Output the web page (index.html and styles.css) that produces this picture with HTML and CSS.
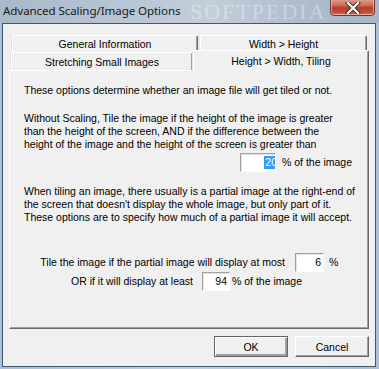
FILE: index.html
```html
<!DOCTYPE html>
<html>
<head>
<meta charset="utf-8">
<link rel="stylesheet" href="styles.css">
</head>
<body>
<div class="window">
  <div class="titlebar">
    <span class="title">Advanced Scaling/Image Options</span>
    <div class="close">
      <svg width="16" height="12" viewBox="0 0 16 12">
        <path d="M3 1 L13 11 M13 1 L3 11" stroke="#3a2a2a" stroke-width="4" stroke-linecap="square"/>
        <path d="M3 1 L13 11 M13 1 L3 11" stroke="#ffffff" stroke-width="2.2" stroke-linecap="square"/>
      </svg>
    </div>
  </div>
  <div class="client">
    <div class="tabs">
      <div class="tabrow back">
        <div class="tab t1">General Information</div>
        <div class="tab t2">Width &gt; Height</div>
      </div>
      <div class="tabrow front">
        <div class="tab t3">Stretching Small Images</div>
        <div class="tab t4">Height &gt; Width, Tiling</div>
      </div>
      <div class="panel">
        <p class="p1">These options determine whether an image file will get tiled or not.</p>
        <p class="p2">Without Scaling, Tile the image if the height of the image is greater<br>than the height of the screen, AND if the difference between the<br>height of the image and the height of the screen is greater than</p>
        <div class="row r1">
          <div class="edit e1"><span class="selected">20</span></div>
          <span class="after1">% of the image</span>
        </div>
        <p class="p3">When tiling an image, there usually is a partial image at the right-end of<br>the screen that doesn't display the whole image, but only part of it.<br>These options are to specify how much of a partial image it will accept.</p>
        <div class="row r2">
          <span class="lbl l2">Tile the image if the partial image will display at most</span>
          <div class="edit e2">6</div>
          <span class="after2">%</span>
        </div>
        <div class="row r3">
          <span class="lbl l3">OR if it will display at least</span>
          <div class="edit e3">94</div>
          <span class="after3">% of the image</span>
        </div>
      </div>
    </div>
    <div class="buttons">
      <div class="btn ok">OK</div>
      <div class="btn cancel">Cancel</div>
    </div>
  </div>
  <div class="wm wm1">SOFTPEDIA</div>
</div>
</body>
</html>
```

FILE: styles.css
```css
* { box-sizing: border-box; }
html, body { margin: 0; padding: 0; }
body {
  width: 379px;
  height: 369px;
  overflow: hidden;
  background: #f0f0f0;
}
.window {
  position: relative;
  width: 379px;
  height: 369px;
  background: linear-gradient(to right, #a8c0da 0%, #bcd0e6 50%, #a8c0da 100%);
  overflow: hidden;
  font-family: "Liberation Sans", Arial, sans-serif;
  font-size: 10.5px;
  color: #000;
}
.titlebar {
  height: 23px;
  position: relative;
  background: linear-gradient(to right, #a9b8ca 0%, #b9c6d5 35%, #c3ced9 55%, #aebccd 80%, #a6b5c7 100%);
  display: flex;
  align-items: center;
}
.title {
  font-family: "Noto Sans", "DejaVu Sans", sans-serif;
  font-size: 11.6px;
  color: #1a1a1a;
  margin-left: 3px;
  margin-top: -2px;
  letter-spacing: -0.1px;
}
.close {
  position: absolute;
  left: 330px;
  top: -2px;
  width: 45px;
  height: 18px;
  border: 1px solid #6b3a34;
  border-radius: 0 0 4px 4px;
  background: linear-gradient(to bottom, #e0a394 0%, #d06a58 40%, #b83b26 55%, #c4513a 85%, #d9806a 100%);
  box-shadow: inset 0 0 0 1px rgba(255,220,210,0.5);
  display: flex;
  align-items: center;
  justify-content: center;
}
.close svg { margin-top: 1px; }
.client {
  margin-left: 2px;
  width: 374px;
  height: 344px;
  border: 1px solid #44566c;
  background: #f0f0f0;
  display: flex;
  flex-direction: column;
}
.tabs {
  margin-top: 11px;
  margin-left: 6px;
  width: 360px;
  display: flex;
  flex-direction: column;
}
.tabrow {
  display: flex;
  align-items: flex-end;
}
.tabrow.back { height: 17px; padding-left: 3px; }
.tabrow.front { height: 18px; padding-left: 2px; }
.tab {
  background: #f0f0f0;
  border-top: 1px solid #ffffff;
  border-left: 1px solid #ffffff;
  border-right: 1px solid #696969;
  box-shadow: inset -1px 0 0 #a0a0a0, -1px 0 0 #e3e3e3;
  border-radius: 2px 2px 0 0;
  display: flex;
  align-items: center;
  justify-content: center;
  white-space: nowrap;
}
.t1 { width: 186px; height: 17px; }
.t2 { width: 167px; height: 17px; margin-left: 2px; }
.t3 { width: 182px; height: 18px; }
.t4 {
  width: 176px;
  height: 21px;
  margin-bottom: -1px;
  position: relative;
  z-index: 1;
  padding-bottom: 1px;
}
.panel {
  height: 259px;
  border-top: 1px solid #ffffff;
  border-left: 1px solid #ffffff;
  border-right: 1px solid #696969;
  border-bottom: 1px solid #696969;
  box-shadow: inset -1px -1px 0 #a0a0a0;
  padding: 13px 0 0 14px;
  line-height: 13px;
}
.panel p { margin: 0; white-space: nowrap; }
.p2 { margin-top: 15px !important; }
.p3 { margin-top: 13px !important; }
.row {
  display: flex;
  align-items: center;
  height: 19px;
  white-space: nowrap;
}
.r1 { margin-top: 2px; padding-left: 216px; }
.r2 { margin-top: 29px; }
.edit {
  height: 19px;
  background: #ffffff;
  border-top: 1px solid #a0a0a0;
  border-left: 1px solid #a0a0a0;
  border-right: 1px solid #ffffff;
  border-bottom: 1px solid #ffffff;
  box-shadow: inset 1px 1px 0 #e3e3e3;
  display: flex;
  align-items: center;
  justify-content: flex-end;
  overflow: hidden;
  padding-right: 2px;
}
.e1 { width: 36px; padding-right: 0; }
.selected {
  background: #3399ff;
  color: #ffffff;
  line-height: 13px;
  margin-right: -3px;
  padding: 0 1px;
}
.after1 { margin-left: 6px; }
.lbl { text-align: right; display: block; }
.l2 { width: 261px; }
.e2 { width: 29px; margin-left: 10px; }
.after2 { margin-left: 5px; }
.l3 { width: 169px; }
.e3 { width: 28px; margin-left: 9px; }
.after3 { margin-left: 2px; }
.buttons {
  margin-top: 7px;
  display: flex;
  justify-content: flex-end;
  padding-right: 6px;
  gap: 7px;
}
.btn {
  width: 74px;
  height: 21px;
  background: #f0f0f0;
  border-top: 1px solid #ffffff;
  border-left: 1px solid #ffffff;
  border-right: 1px solid #696969;
  border-bottom: 1px solid #696969;
  box-shadow: inset -1px -1px 0 #a0a0a0;
  display: flex;
  align-items: center;
  justify-content: center;
}
.ok {
  border: 1px solid #646464;
  box-shadow: inset 1px 1px 0 #ffffff, inset -2px -2px 0 #a0a0a0;
}
.wm {
  position: absolute;
  font-family: "Liberation Serif", serif;
  font-size: 22px;
  line-height: 22px;
  letter-spacing: 2px;
  color: rgba(255,255,255,0.35);
  pointer-events: none;
  white-space: nowrap;
}
.wm1 { left: 190px; top: 1px; }
```
